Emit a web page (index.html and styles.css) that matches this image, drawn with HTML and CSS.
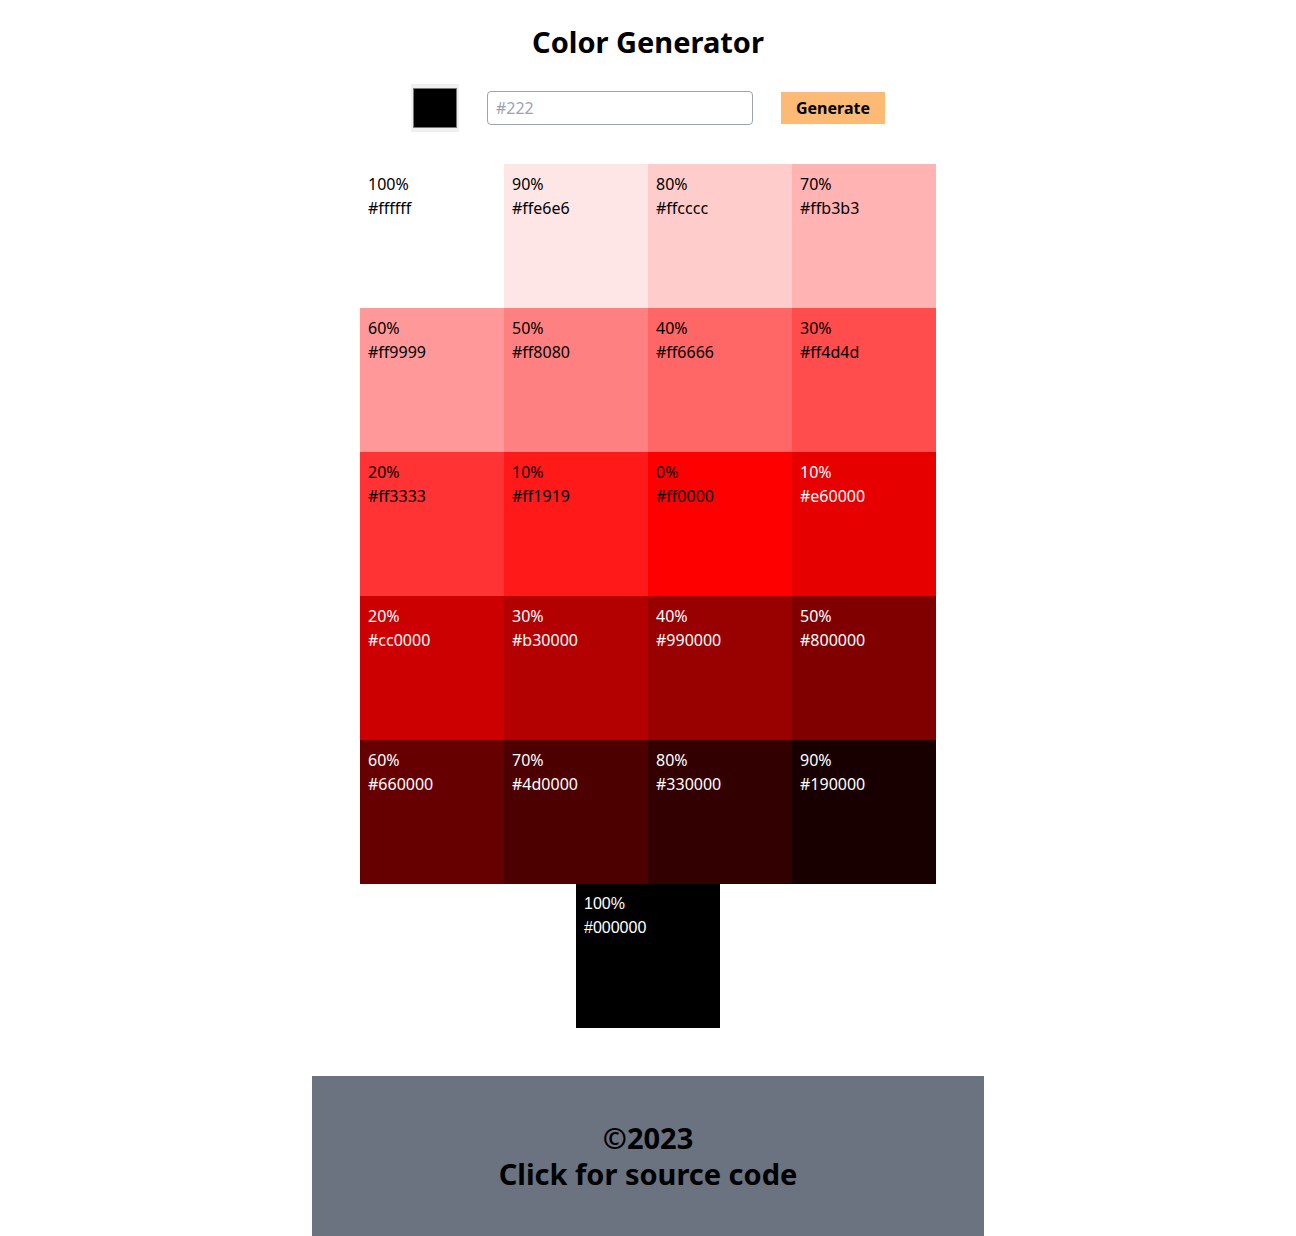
FILE: index.html
```html
<!DOCTYPE html>
<html>

<head>
    <title>Color Generator</title>
    <link rel="stylesheet" href="styles.css">
</head>

<body>
    <h1 class="title">Color Generator</h1>

    <form class="controls" id="colorForm">
        <input type="color" class="color-picker" id="colorPicker" value="#000000">
        <input type="text" class="color-text" id="colorText" placeholder="#222">
        <button class="generate-btn" type="submit">Generate</button>
    </form>

    <div class="palette">
        <div class="tile" style="background-color: #ffffff"><p>100%</p><p>#ffffff</p></div>
        <div class="tile" style="background-color: #ffe6e6"><p>90%</p><p>#ffe6e6</p></div>
        <div class="tile" style="background-color: #ffcccc"><p>80%</p><p>#ffcccc</p></div>
        <div class="tile" style="background-color: #ffb3b3"><p>70%</p><p>#ffb3b3</p></div>
        <div class="tile" style="background-color: #ff9999"><p>60%</p><p>#ff9999</p></div>
        <div class="tile" style="background-color: #ff8080"><p>50%</p><p>#ff8080</p></div>
        <div class="tile" style="background-color: #ff6666"><p>40%</p><p>#ff6666</p></div>
        <div class="tile" style="background-color: #ff4d4d"><p>30%</p><p>#ff4d4d</p></div>
        <div class="tile" style="background-color: #ff3333"><p>20%</p><p>#ff3333</p></div>
        <div class="tile" style="background-color: #ff1919"><p>10%</p><p>#ff1919</p></div>
        <div class="tile" style="background-color: #ff0000"><p>0%</p><p>#ff0000</p></div>
        <div class="tile dark" style="background-color: #e60000"><p>10%</p><p>#e60000</p></div>
        <div class="tile dark" style="background-color: #cc0000"><p>20%</p><p>#cc0000</p></div>
        <div class="tile dark" style="background-color: #b30000"><p>30%</p><p>#b30000</p></div>
        <div class="tile dark" style="background-color: #990000"><p>40%</p><p>#990000</p></div>
        <div class="tile dark" style="background-color: #800000"><p>50%</p><p>#800000</p></div>
        <div class="tile dark" style="background-color: #660000"><p>60%</p><p>#660000</p></div>
        <div class="tile dark" style="background-color: #4d0000"><p>70%</p><p>#4d0000</p></div>
        <div class="tile dark" style="background-color: #330000"><p>80%</p><p>#330000</p></div>
        <div class="tile dark" style="background-color: #190000"><p>90%</p><p>#190000</p></div>
        <div class="tile dark last" style="background-color: #000000"><p>100%</p><p>#000000</p></div>
    </div>

    <footer class="footer">
        <a href="#">&copy;2023<br>Click for source code</a>
    </footer>
</body>

</html>
```

FILE: styles.css
```css
body {
    margin: 0;
    font-family: "Noto Sans", "Open Sans", sans-serif;
    color: #000;
}

.title {
    margin: 24px 0 24px;
    font-size: 29px;
    line-height: 36px;
    text-align: center;
}

.controls {
    display: flex;
    justify-content: center;
    align-items: center;
    gap: 28px;
    margin: 0 0 32px;
}

.color-picker {
    width: 48px;
    height: 48px;
    margin: 0;
    padding: 0;
    border: none;
    background-color: #efefef;
    cursor: pointer;
}

.color-text {
    width: 266px;
    height: 34px;
    padding: 4px 8px;
    border: 1px solid #9ca3af;
    border-radius: 4px;
    font-family: inherit;
    font-size: 16px;
    box-sizing: border-box;
}

.color-text::placeholder {
    color: #9ca3af;
}

.generate-btn {
    height: 32px;
    padding: 0 15px;
    background-color: #fdba74;
    border: none;
    font-family: inherit;
    font-size: 16px;
    font-weight: bold;
    cursor: pointer;
}

.palette {
    display: flex;
    flex-wrap: wrap;
    justify-content: center;
    width: 576px;
    margin: 0 auto;
}

.tile {
    width: 144px;
    height: 144px;
    padding: 8px;
    box-sizing: border-box;
    font-size: 16px;
    line-height: 24px;
    color: #000;
}

.tile p {
    margin: 0;
}

.tile.dark {
    color: #fff;
}

.tile.last {
    font-family: "Liberation Sans", sans-serif;
}

.footer {
    width: 672px;
    margin: 48px auto 0;
    padding: 44px 0;
    background-color: #6b7280;
    text-align: center;
}

.footer a {
    color: #000;
    text-decoration: none;
    font-size: 29px;
    line-height: 36px;
    font-weight: bold;
}
```
